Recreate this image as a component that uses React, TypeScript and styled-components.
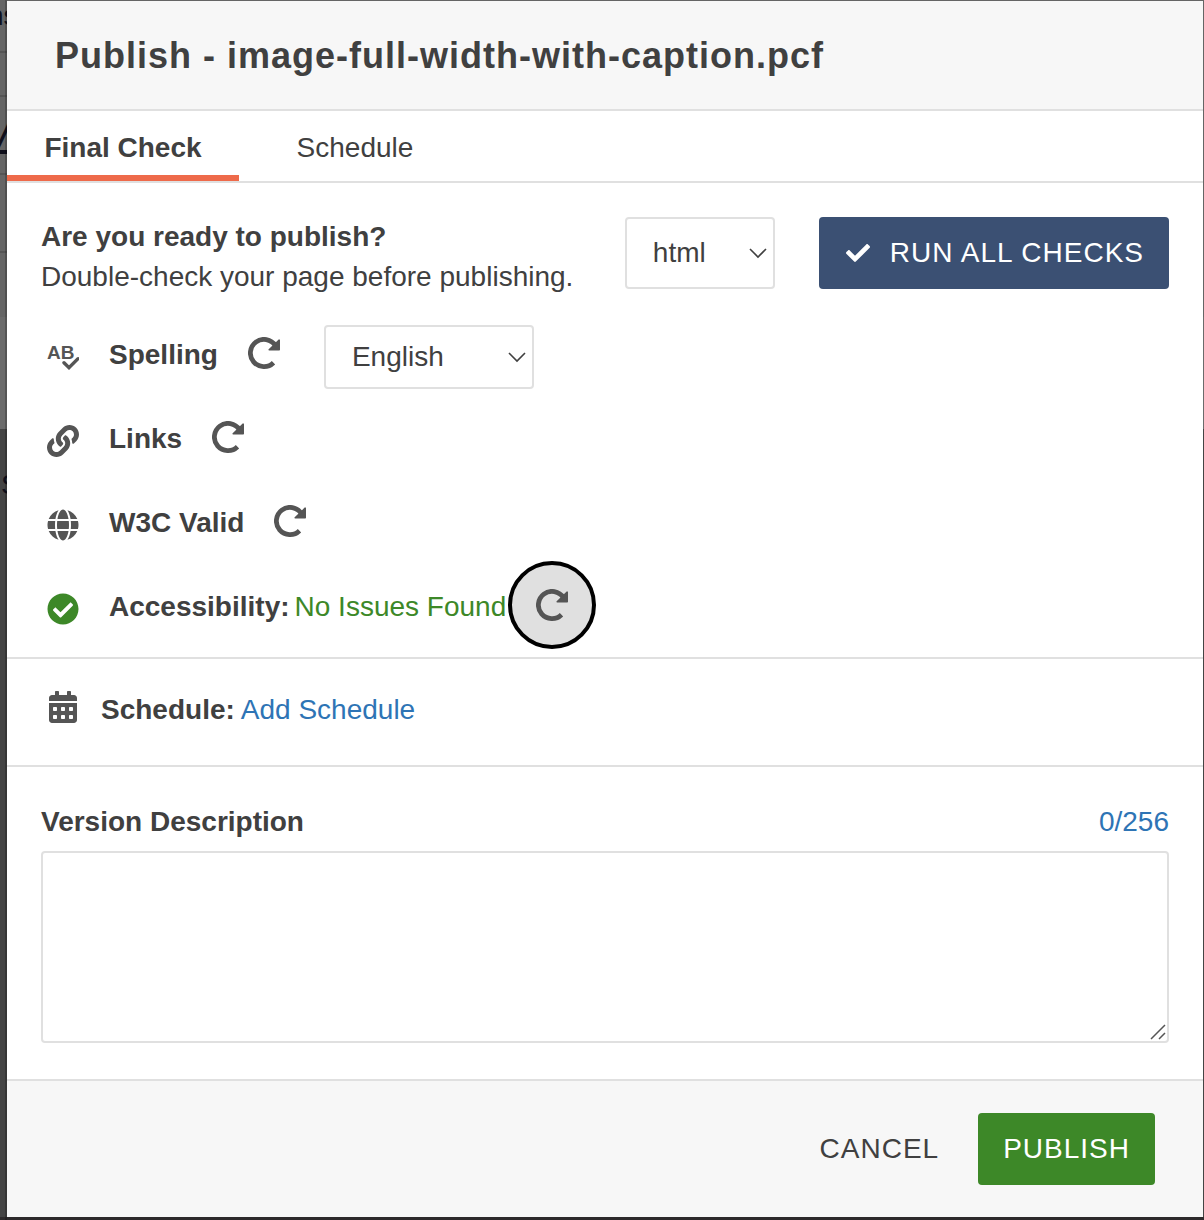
import React, { useState } from "react";
import styled, { createGlobalStyle, css } from "styled-components";
import {
  FaCalendarAlt,
  FaCheck,
  FaCheckCircle,
  FaGlobe,
  FaLink,
} from "react-icons/fa";

const color = {
  text: "#404040",
  icon: "#555555",
  line: "#e0e0e0",
  bar: "#f7f7f7",
  accent: "#ee6a4a",
  navy: "#3b5073",
  green: "#3d8828",
  link: "#2e74b5",
};

const GlobalStyle = createGlobalStyle`
  *, *::before, *::after { box-sizing: border-box; }
  body {
    margin: 0;
    color: ${color.text};
    font: 400 28px/40px "Liberation Sans", Arial, sans-serif;
  }
  button, select, textarea { font: inherit; color: inherit; }
  h1, h2, p { margin: 0; }
`;

const Backdrop = styled.div`
  position: relative;
  display: flex;
  flex-direction: column;
  min-height: 100vh;
  padding: 1px 1px 3px 7px;
  overflow: hidden;
  background: linear-gradient(#656565 0 317px, #6b6b6b 317px 429px, #444444 429px);
  box-shadow: inset 0 -3px #2d2a2b;
`;

const PageBehind = styled.div`
  position: absolute;
  inset: 0 auto 0 0;
  width: 7px;
  overflow: hidden;
  background: linear-gradient(
    transparent 51px, #555 51px 53px, transparent 53px 95px,
    #555 95px 97px, transparent 97px 173px, #555 173px 175px,
    transparent 175px 251px, #555 251px 253px, transparent 253px
  );

  &::after {
    content: "";
    position: absolute;
    inset: 0 0 0 auto;
    width: 2px;
    background: #0003;
  }
`;

const Fragment = styled.span<{ $top: number; $left: number; $size: number }>`
  position: absolute;
  top: ${(p) => p.$top}px;
  left: ${(p) => p.$left}px;
  color: #10101c;
  font-size: ${(p) => p.$size}px;
  line-height: 32px;
`;

const Dialog = styled.section`
  position: relative;
  display: flex;
  flex: 1;
  flex-direction: column;
  background: #fff;
`;

const Header = styled.header`
  padding: 35px 48px 33px;
  border-bottom: 2px solid ${color.line};
  background: ${color.bar};
`;

const Title = styled.h1`
  font-size: 36px;
  line-height: 40px;
  font-weight: 700;
  letter-spacing: 1px;
`;

const Tabs = styled.nav`
  display: flex;
  border-bottom: 2px solid ${color.line};
`;

const Tab = styled.button<{ $active: boolean }>`
  min-width: 232px;
  height: 70px;
  padding: 10px 36px 0;
  border: 0;
  border-bottom: 6px solid transparent;
  background: none;
  text-align: center;
  ${(p) =>
    p.$active &&
    css`
      border-color: ${color.accent};
      font-weight: 700;
    `}
`;

const Checks = styled.div`
  padding: 34px 34px 10px;
  border-bottom: 2px solid ${color.line};
`;

const Intro = styled.div`
  display: flex;
  align-items: flex-start;
  gap: 44px;
  margin-bottom: 14px;
`;

const IntroText = styled.div`
  flex: 1;
  white-space: nowrap;
`;

const Heading = styled.h2`
  font-size: 28px;
  line-height: 40px;
`;

const SelectBox = styled.span<{ $width: number; $height: number }>`
  position: relative;
  display: flex;
  width: ${(p) => p.$width}px;
  height: ${(p) => p.$height}px;

  svg {
    position: absolute;
    top: calc(50% - 5px);
    right: 8px;
    pointer-events: none;
  }
`;

const LanguageBox = styled(SelectBox)`
  margin-top: 8px;
`;

const Select = styled.select`
  width: 100%;
  padding: 0 26px;
  border: 2px solid ${color.line};
  border-radius: 4px;
  background: #fff;
  appearance: none;
`;

const Button = styled.button<{ $fill?: string }>`
  display: flex;
  align-items: center;
  justify-content: center;
  gap: 20px;
  height: 72px;
  padding: 0 25px;
  border: 0;
  border-radius: 4px;
  background: ${(p) => p.$fill ?? "none"};
  color: ${(p) => (p.$fill ? "#fff" : color.text)};
  letter-spacing: 1px;
  white-space: nowrap;

  svg {
    margin-left: 2px;
  }
`;

const CheckList = styled.ul`
  margin: 0;
  padding: 0;
  list-style: none;
`;

const CheckRow = styled.li`
  display: flex;
  align-items: center;
  height: 84px;
  padding-left: 6px;
`;

const RowIcon = styled.span<{ $color?: string }>`
  display: flex;
  flex: none;
  width: 62px;
  padding-top: 8px;
  color: ${(p) => p.$color ?? color.icon};
`;

const CheckName = styled.strong`
  padding-top: 4px;
`;

const Status = styled.span`
  margin-left: 5px;
  padding-top: 4px;
  color: ${color.green};
`;

const RefreshButton = styled.button<{ $focused?: boolean }>`
  display: flex;
  flex: none;
  align-items: center;
  justify-content: center;
  width: 88px;
  height: 88px;
  margin: 0 16px 0 2px;
  padding: 0;
  border: 4px solid ${(p) => (p.$focused ? "#000" : "transparent")};
  border-radius: 50%;
  background: ${(p) => (p.$focused ? color.line : "none")};
  color: ${color.icon};
`;

const ScheduleRow = styled.div`
  display: flex;
  align-items: center;
  gap: 6px;
  height: 108px;
  padding: 0 40px 4px;
  border-bottom: 2px solid ${color.line};
`;

const ScheduleIcon = styled.span`
  display: flex;
  justify-content: center;
  width: 32px;
  margin-right: 16px;
  padding-bottom: 6px;
  color: ${color.icon};
`;

const Link = styled.a`
  color: ${color.link};
  text-decoration: none;
`;

const Version = styled.div`
  display: flex;
  flex: 1;
  flex-direction: column;
  padding: 35px 34px 36px;
`;

const VersionHead = styled.div`
  display: flex;
  justify-content: space-between;
  margin-bottom: 9px;
`;

const VersionLabel = styled.label`
  font-weight: 700;
`;

const Counter = styled.span`
  color: ${color.link};
`;

const TextBox = styled.span`
  position: relative;
  display: flex;
  flex: 1;

  svg {
    position: absolute;
    right: 3px;
    bottom: 3px;
    pointer-events: none;
  }
`;

const TextArea = styled.textarea`
  width: 100%;
  min-height: 192px;
  padding: 12px;
  border: 2px solid ${color.line};
  border-radius: 4px;
  background: #fff;
  resize: none;
`;

const Footer = styled.footer`
  display: flex;
  justify-content: flex-end;
  gap: 14px;
  padding: 32px 48px;
  border-top: 2px solid ${color.line};
  background: ${color.bar};
`;

const Chevron = () => (
  <svg width="18" height="11" viewBox="0 0 18 11" fill="none" stroke={color.text} strokeWidth="1.6">
    <path d="M1 1l8 8 8-8" />
  </svg>
);

const Grip = () => (
  <svg width="16" height="16" viewBox="0 0 16 16" fill="none" stroke="#555" strokeWidth="1.5">
    <path d="M1 15L15 1M9 15l6-6" />
  </svg>
);

const SpellCheckIcon = () => (
  <svg width="32" height="32" viewBox="0 0 32 32" fill="none" aria-hidden="true">
    <text x="0" y="18" fontSize="19" fontWeight="700" fill="currentColor">AB</text>
    <path d="M17 22l5 4.5 9.5-9" stroke="#fff" strokeWidth="5" />
    <path d="M17 21.7l5 5 9-9" stroke="currentColor" strokeWidth="3.4" strokeLinecap="round" />
  </svg>
);

const RefreshIcon = () => (
  <svg width="32" height="32" viewBox="0 0 32 32" fill="none" aria-hidden="true">
    <path d="M27.4 8.6A13.6 13.6 0 1 0 25.5 25.7" stroke="currentColor" strokeWidth="4.8" />
    <path
      d="M31.2 3.2v9.6H21.2z"
      fill="currentColor"
      stroke="currentColor"
      strokeWidth="1.6"
      strokeLinejoin="round"
    />
  </svg>
);

const Refresh = ({ name, focused }: { name: string; focused?: boolean }) => (
  <RefreshButton type="button" $focused={focused} aria-label={`Check ${name}`}>
    <RefreshIcon />
  </RefreshButton>
);

export default function App() {
  const [tab, setTab] = useState("Final Check");
  const [note, setNote] = useState("");

  return (
    <>
      <GlobalStyle />
      <Backdrop>
        <PageBehind aria-hidden="true">
          <Fragment $top={0} $left={-12} $size={28}>ns</Fragment>
          <Fragment $top={118} $left={-28} $size={40}><u><i>W</i></u></Fragment>
          <Fragment $top={469} $left={1} $size={28}>S</Fragment>
        </PageBehind>
        <Dialog>
          <Header>
            <Title>Publish - image-full-width-with-caption.pcf</Title>
          </Header>
          <Tabs>
            {["Final Check", "Schedule"].map((name) => (
              <Tab key={name} type="button" $active={tab === name} onClick={() => setTab(name)}>
                {name}
              </Tab>
            ))}
          </Tabs>
          <Checks>
            <Intro>
              <IntroText>
                <Heading>Are you ready to publish?</Heading>
                <p>Double-check your page before publishing.</p>
              </IntroText>
              <SelectBox $width={150} $height={72}>
                <Select aria-label="File type">
                  <option>html</option>
                </Select>
                <Chevron />
              </SelectBox>
              <Button type="button" $fill={color.navy}>
                <FaCheck size={24} />
                RUN ALL CHECKS
              </Button>
            </Intro>
            <CheckList>
              <CheckRow>
                <RowIcon><SpellCheckIcon /></RowIcon>
                <CheckName>Spelling</CheckName>
                <Refresh name="spelling" />
                <LanguageBox $width={210} $height={64}>
                  <Select aria-label="Language">
                    <option>English</option>
                  </Select>
                  <Chevron />
                </LanguageBox>
              </CheckRow>
              <CheckRow>
                <RowIcon><FaLink size={32} /></RowIcon>
                <CheckName>Links</CheckName>
                <Refresh name="links" />
              </CheckRow>
              <CheckRow>
                <RowIcon><FaGlobe size={32} /></RowIcon>
                <CheckName>W3C Valid</CheckName>
                <Refresh name="W3C validity" />
              </CheckRow>
              <CheckRow>
                <RowIcon $color={color.green}><FaCheckCircle size={32} /></RowIcon>
                <CheckName>Accessibility:</CheckName>
                <Status>No Issues Found</Status>
                <Refresh name="accessibility" focused />
              </CheckRow>
            </CheckList>
          </Checks>
          <ScheduleRow>
            <ScheduleIcon><FaCalendarAlt size={32} /></ScheduleIcon>
            <b>Schedule:</b>
            <Link href="#schedule">Add Schedule</Link>
          </ScheduleRow>
          <Version>
            <VersionHead>
              <VersionLabel htmlFor="version">Version Description</VersionLabel>
              <Counter>{note.length}/256</Counter>
            </VersionHead>
            <TextBox>
              <TextArea
                id="version"
                maxLength={256}
                value={note}
                onChange={(e) => setNote(e.target.value)}
              />
              <Grip />
            </TextBox>
          </Version>
          <Footer>
            <Button type="button">CANCEL</Button>
            <Button type="button" $fill={color.green}>PUBLISH</Button>
          </Footer>
        </Dialog>
      </Backdrop>
    </>
  );
}
